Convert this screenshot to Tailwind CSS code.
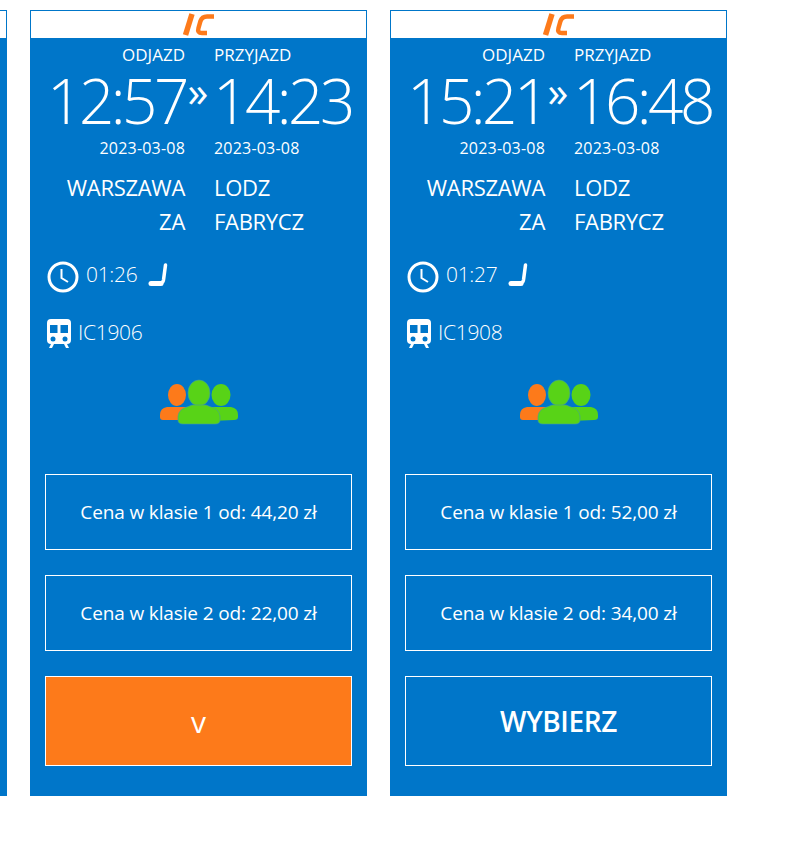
<!DOCTYPE html>
<html lang="pl">
<head>
<meta charset="UTF-8" />
<title>Pociągi</title>
<script src="https://cdn.jsdelivr.net/npm/@tailwindcss/browser@4"></script>
</head>
<body class="bg-white overflow-hidden font-['Open_Sans',sans-serif] text-white">
<div class="flex gap-[23px] ml-[-330px] pt-[10px] w-[1200px]">

	<!-- cropped card on the left -->
	<div class="w-[337px] h-[786px] bg-[#0076c9]">
		<div class="h-[29px] bg-white border border-[#0076c9]"></div>
	</div>

	<!-- 12:57 -->
	<div class="w-[337px] h-[786px] bg-[#0076c9]">
		<div class="h-[29px] bg-white border border-[#0076c9] flex justify-center items-center">
			<svg width="34" height="25" viewBox="0 0 34 25" fill="none" stroke="#fd7a1a"><path stroke-width="5.500" d="M10 2 L3.500 23" /><path stroke-width="4.500" d="M32 4.500 H25 Q20 4.500 18.500 9 L16.500 16 Q15 21 20 21 H25" /></svg>
		</div>
		<div class="grid grid-cols-[155px_auto] gap-x-[29px] pt-[6px] text-[17px] leading-[20px]">
			<div class="text-right">ODJAZD</div>
			<div>PRZYJAZD</div>
		</div>
		<div class="flex h-[71px] items-center text-[62px] leading-[71px] font-light tracking-[-3.5px] pl-[17px]">
			<span class="w-[136px] text-right">12:57</span>
			<span class="w-[30px] text-center text-[42px] font-medium tracking-normal -mt-[20px]">»</span>
			<span>14:23</span>
		</div>
		<div class="grid grid-cols-[155px_auto] gap-x-[29px] pt-[2px] text-[16px] leading-[20px] tracking-[0.2px]">
			<div class="text-right">2023-03-08</div>
			<div>2023-03-08</div>
		</div>
		<div class="grid grid-cols-[155px_auto] gap-x-[29px] pt-[12px] text-[22px] leading-[34px] tracking-[-0.3px]">
			<div class="text-right">WARSZAWA<br />ZA</div>
			<div>LODZ<br />FABRYCZ</div>
		</div>
		<div class="flex items-center h-[32px] mt-[23px] pl-[17px] text-[21px] font-light tracking-[-0.3px]">
			<svg width="32" height="32" viewBox="0 0 32 32" fill="none" stroke="white" class="mr-[7px]"><circle cx="16" cy="16" r="14" stroke-width="3" /><path d="M14.500 8 V17 L21 21" stroke-width="2" /></svg>
			<span class="-mt-[5px]">01:26</span>
			<svg width="20" height="24" viewBox="0 0 20 24" fill="none" stroke="white" stroke-linecap="round" stroke-linejoin="round" class="ml-[11px] -mt-[5px]"><path stroke-width="3.500" d="M17.500 2 L15.500 17 Q15 20 12 20" /><path stroke-width="5" d="M3 20.500 H13" /></svg>
		</div>
		<div class="flex items-center h-[30px] mt-[25px] pl-[17px] text-[21px] font-light tracking-[-0.3px]">
			<svg width="24" height="29" viewBox="0 0 24 29" class="mr-[7px]"><path fill="white" d="M4 0 H20 Q24 0 24 4 V21 Q24 25 20 25 L22 29 H19 L17 25 H7 L5 29 H2 L4 25 Q0 25 0 21 V4 Q0 0 4 0 Z" /><path fill="#0076c9" d="M3 6 H10.500 V14 H3 Z M13.500 6 H21 V14 H13.500 Z" /><circle cx="6" cy="20" r="2.500" fill="#0076c9" /><circle cx="18" cy="20" r="2.500" fill="#0076c9" /></svg>
			<span>IC1906</span>
		</div>
		<div class="flex justify-center mt-[31px] h-[48px]">
			<svg width="80" height="48" viewBox="0 0 80 48"><ellipse cx="18" cy="16" rx="9" ry="11" fill="#fd7a1a" /><path fill="#fd7a1a" d="M1 36 Q1 29 8 28 L28 28 V41 H4 Q1 41 1 38 Z" /><ellipse cx="62" cy="16" rx="9.500" ry="11" fill="#58d317" /><path fill="#58d317" d="M52 28 H72 Q79 29 79 36 V38 Q79 41 75 41 L52 42 Z" /><ellipse cx="40" cy="14" rx="11" ry="13" fill="#58d317" stroke="#3f9fa0" stroke-width="0.600" /><path fill="#58d317" stroke="#3f9fa0" stroke-width="0.600" d="M19 37 Q20 30 28 28 L33 26 H47 L52 28 Q60 30 61 37 V41 Q61 45 56 45 H24 Q19 45 19 41 Z" /></svg>
		</div>
		<div class="mx-[15px] mt-[47px] flex flex-col gap-[25px] text-[19px] tracking-[-0.13px]">
			<div class="h-[76px] border border-white flex items-center justify-center">Cena w klasie 1 od: 44,20 zł</div>
			<div class="h-[76px] border border-white flex items-center justify-center">Cena w klasie 2 od: 22,00 zł</div>
			<div class="h-[90px] border border-white bg-[#fd7a1a] flex items-center justify-center text-[30px]">v</div>
		</div>
	</div>

	<!-- 15:21 -->
	<div class="w-[337px] h-[786px] bg-[#0076c9]">
		<div class="h-[29px] bg-white border border-[#0076c9] flex justify-center items-center">
			<svg width="34" height="25" viewBox="0 0 34 25" fill="none" stroke="#fd7a1a"><path stroke-width="5.500" d="M10 2 L3.500 23" /><path stroke-width="4.500" d="M32 4.500 H25 Q20 4.500 18.500 9 L16.500 16 Q15 21 20 21 H25" /></svg>
		</div>
		<div class="grid grid-cols-[155px_auto] gap-x-[29px] pt-[6px] text-[17px] leading-[20px]">
			<div class="text-right">ODJAZD</div>
			<div>PRZYJAZD</div>
		</div>
		<div class="flex h-[71px] items-center text-[62px] leading-[71px] font-light tracking-[-3.5px] pl-[17px]">
			<span class="w-[136px] text-right">15:21</span>
			<span class="w-[30px] text-center text-[42px] font-medium tracking-normal -mt-[20px]">»</span>
			<span>16:48</span>
		</div>
		<div class="grid grid-cols-[155px_auto] gap-x-[29px] pt-[2px] text-[16px] leading-[20px] tracking-[0.2px]">
			<div class="text-right">2023-03-08</div>
			<div>2023-03-08</div>
		</div>
		<div class="grid grid-cols-[155px_auto] gap-x-[29px] pt-[12px] text-[22px] leading-[34px] tracking-[-0.3px]">
			<div class="text-right">WARSZAWA<br />ZA</div>
			<div>LODZ<br />FABRYCZ</div>
		</div>
		<div class="flex items-center h-[32px] mt-[23px] pl-[17px] text-[21px] font-light tracking-[-0.3px]">
			<svg width="32" height="32" viewBox="0 0 32 32" fill="none" stroke="white" class="mr-[7px]"><circle cx="16" cy="16" r="14" stroke-width="3" /><path d="M14.500 8 V17 L21 21" stroke-width="2" /></svg>
			<span class="-mt-[5px]">01:27</span>
			<svg width="20" height="24" viewBox="0 0 20 24" fill="none" stroke="white" stroke-linecap="round" stroke-linejoin="round" class="ml-[11px] -mt-[5px]"><path stroke-width="3.500" d="M17.500 2 L15.500 17 Q15 20 12 20" /><path stroke-width="5" d="M3 20.500 H13" /></svg>
		</div>
		<div class="flex items-center h-[30px] mt-[25px] pl-[17px] text-[21px] font-light tracking-[-0.3px]">
			<svg width="24" height="29" viewBox="0 0 24 29" class="mr-[7px]"><path fill="white" d="M4 0 H20 Q24 0 24 4 V21 Q24 25 20 25 L22 29 H19 L17 25 H7 L5 29 H2 L4 25 Q0 25 0 21 V4 Q0 0 4 0 Z" /><path fill="#0076c9" d="M3 6 H10.500 V14 H3 Z M13.500 6 H21 V14 H13.500 Z" /><circle cx="6" cy="20" r="2.500" fill="#0076c9" /><circle cx="18" cy="20" r="2.500" fill="#0076c9" /></svg>
			<span>IC1908</span>
		</div>
		<div class="flex justify-center mt-[31px] h-[48px]">
			<svg width="80" height="48" viewBox="0 0 80 48"><ellipse cx="18" cy="16" rx="9" ry="11" fill="#fd7a1a" /><path fill="#fd7a1a" d="M1 36 Q1 29 8 28 L28 28 V41 H4 Q1 41 1 38 Z" /><ellipse cx="62" cy="16" rx="9.500" ry="11" fill="#58d317" /><path fill="#58d317" d="M52 28 H72 Q79 29 79 36 V38 Q79 41 75 41 L52 42 Z" /><ellipse cx="40" cy="14" rx="11" ry="13" fill="#58d317" stroke="#3f9fa0" stroke-width="0.600" /><path fill="#58d317" stroke="#3f9fa0" stroke-width="0.600" d="M19 37 Q20 30 28 28 L33 26 H47 L52 28 Q60 30 61 37 V41 Q61 45 56 45 H24 Q19 45 19 41 Z" /></svg>
		</div>
		<div class="mx-[15px] mt-[47px] flex flex-col gap-[25px] text-[19px] tracking-[-0.13px]">
			<div class="h-[76px] border border-white flex items-center justify-center">Cena w klasie 1 od: 52,00 zł</div>
			<div class="h-[76px] border border-white flex items-center justify-center">Cena w klasie 2 od: 34,00 zł</div>
			<div class="h-[90px] border border-white flex items-center justify-center text-[28px] font-semibold tracking-[-0.4px]">WYBIERZ</div>
		</div>
	</div>
</div>
</body>
</html>
